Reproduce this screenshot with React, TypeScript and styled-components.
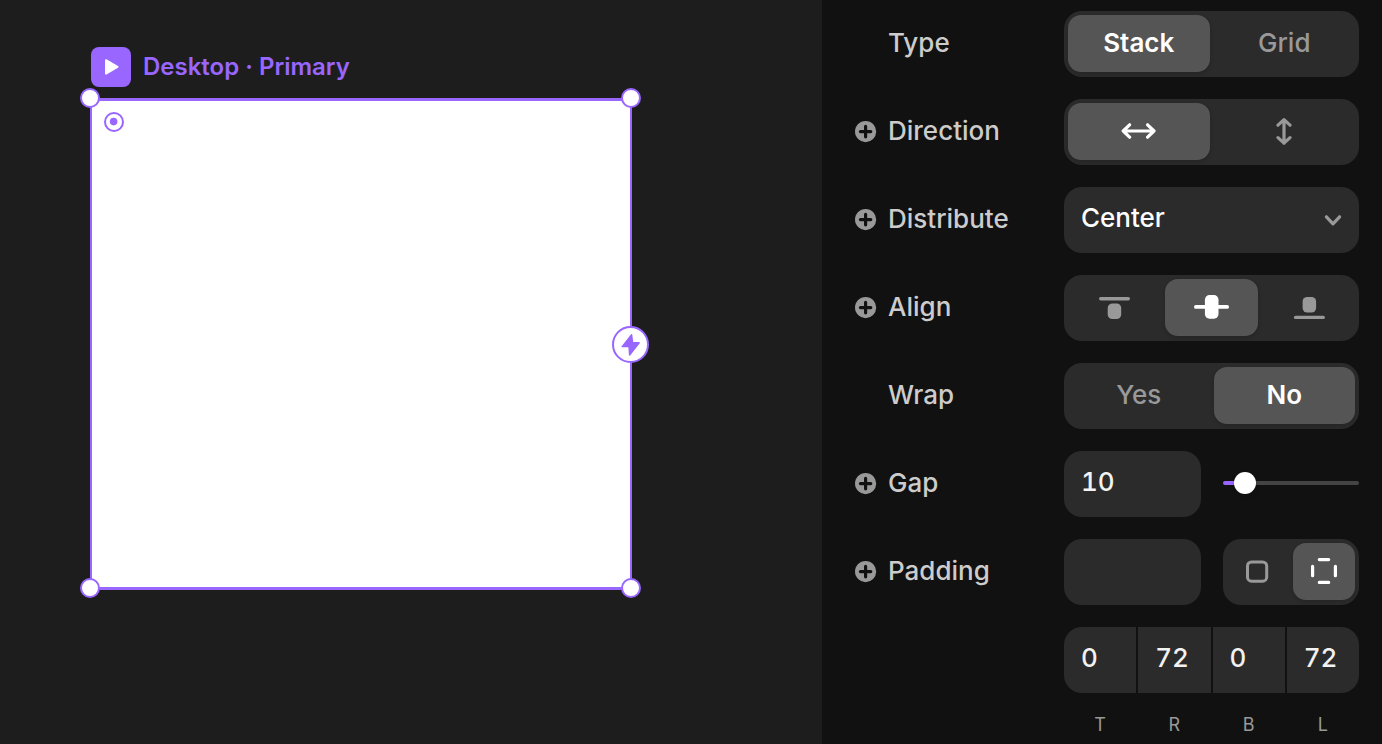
import React, { useState } from "react";
import styled, { createGlobalStyle } from "styled-components";

const color = {
  canvas: "#1d1d1d",
  panel: "#111111",
  field: "#2b2b2b",
  active: "#555555",
  accent: "#9966ff",
  label: "#cccccc",
  muted: "#999999",
};

const GlobalStyle = createGlobalStyle`
  *, *::before, *::after { box-sizing: border-box; }
  body {
    margin: 0;
    background: ${color.panel};
    font-family: Inter, "Liberation Sans", sans-serif;
    font-size: 26px;
    font-weight: 500;
    line-height: 32px;
  }
  button, input, select {
    font: inherit;
    margin: 0;
    border: 0;
    outline: 0;
  }
  button { cursor: pointer; }
  svg { display: block; }
`;

const Editor = styled.div`
  display: flex;
  min-height: 100vh;
`;

const Canvas = styled.main`
  flex: 1;
  min-width: 0;
  padding: 47px 190px 47px 90px;
  background: ${color.canvas};
`;

const FrameTitle = styled.header`
  display: flex;
  align-items: center;
  gap: 12px;
  margin: 0 0 11px 1px;
  color: ${color.accent};
  font-size: 24px;
  font-weight: 600;
  white-space: nowrap;
`;

const PlayButton = styled.button`
  display: grid;
  place-items: center;
  width: 40px;
  height: 40px;
  padding: 0;
  border-radius: 8px;
  background: ${color.accent};
`;

const Frame = styled.section`
  position: relative;
  aspect-ratio: 542 / 492;
  border: 2px solid ${color.accent};
  border-block-width: 3px;
  background: #ffffff;
`;

const Handle = styled.span<{ $v: "top" | "bottom"; $h: "left" | "right" }>`
  position: absolute;
  ${(p) => p.$v}: ${(p) => (p.$v === "top" ? -13 : -11)}px;
  ${(p) => p.$h}: ${(p) => (p.$h === "left" ? -12 : -11)}px;
  width: 20px;
  height: 20px;
  border: 2px solid ${color.accent};
  border-radius: 50%;
  background: #ffffff;
`;

const Target = styled.span`
  position: absolute;
  top: 11px;
  left: 12px;
`;

const BoltButton = styled.button`
  position: absolute;
  top: 50%;
  right: -19px;
  display: grid;
  place-items: center;
  width: 37px;
  height: 37px;
  margin-top: -18px;
  padding: 0;
  border: 2px solid ${color.accent};
  border-radius: 50%;
  background: #ffffff;
`;

const Panel = styled.aside`
  display: flex;
  flex-direction: column;
  gap: 22px;
  width: 560px;
  padding: 11px 23px 9px 33px;
  background: ${color.panel};
`;

const Row = styled.div`
  display: grid;
  grid-template-columns: 209px minmax(0, 1fr);
  align-items: center;
`;

const RowHead = styled.div`
  display: grid;
  grid-template-columns: 22px 1fr;
  column-gap: 11px;
  align-items: center;
`;

const AddButton = styled.button`
  width: 22px;
  height: 22px;
  padding: 0;
  background: none;
`;

const RowLabel = styled.label`
  grid-column: 2;
  padding-bottom: 2px;
  color: ${color.label};
`;

const Split = styled.div`
  display: grid;
  grid-template-columns: 1fr 1fr;
  gap: 22px;
  align-items: center;
`;

const Segments = styled.div`
  display: grid;
  grid-auto-flow: column;
  grid-auto-columns: 1fr;
  gap: 4px;
  height: 66px;
  padding: 4px 4px 5px;
  border-radius: 18px;
  background: ${color.field};
`;

const Segment = styled.button<{ $on: boolean }>`
  display: grid;
  place-items: center;
  padding: 0 0 1px;
  border-radius: 13px;
  background: ${(p) => (p.$on ? color.active : "transparent")};
  box-shadow: ${(p) => (p.$on ? "0 2px 4px rgba(0, 0, 0, 0.15)" : "none")};
  color: ${(p) => (p.$on ? "#ffffff" : color.muted)};
  font-weight: ${(p) => (p.$on ? 600 : 500)};
`;

const SelectBox = styled.div`
  display: grid;
  align-items: center;

  & > * {
    grid-area: 1 / 1;
  }

  & > svg {
    justify-self: end;
    margin-right: 16px;
    pointer-events: none;
  }
`;

const Select = styled.select`
  appearance: none;
  width: 100%;
  height: 66px;
  padding: 0 48px 4px 17px;
  border-radius: 18px;
  background: ${color.field};
  color: #ffffff;
`;

const Field = styled.input`
  width: 100%;
  min-width: 0;
  height: 66px;
  padding: 0 0 5px 17px;
  border-radius: 18px;
  background: ${color.field};
  color: #f2f2f2;
  font-variant-numeric: tabular-nums;
`;

const Slider = styled.input`
  appearance: none;
  width: 100%;
  height: 22px;
  background: none;

  &::-webkit-slider-runnable-track {
    height: 4px;
    border-radius: 2px;
    background: linear-gradient(
      to right,
      ${color.accent} var(--fill),
      #444444 var(--fill)
    );
  }

  &::-webkit-slider-thumb {
    appearance: none;
    width: 22px;
    height: 22px;
    margin-top: -9px;
    border-radius: 50%;
    background: #ffffff;
    box-shadow: 0 2px 4px rgba(0, 0, 0, 0.2);
  }
`;

const SliderBox = styled.div`
  display: flex;
  padding-bottom: 2px;
`;

const Sides = styled.div`
  grid-column: 2;
  display: grid;
  grid-template-columns: repeat(4, 1fr);
  gap: 2px;
`;

const Side = styled.label`
  display: flex;
  flex-direction: column;
  gap: 22px;
  color: ${color.muted};
  font-size: 18px;
  font-weight: 400;
  line-height: 20px;
  text-align: center;

  ${Field} {
    border-radius: 0;
    font-size: 26px;
    font-weight: 500;
  }
  &:first-child ${Field} {
    border-radius: 18px 0 0 18px;
  }
  &:last-child ${Field} {
    border-radius: 0 18px 18px 0;
  }
`;

const PlayIcon = () => (
  <svg width="40" height="40" viewBox="0 0 40 40" aria-hidden="true">
    <path d="M15 13.2 26.5 19.9 15 26.6Z" fill="#fff" stroke="#fff" strokeWidth="2" strokeLinejoin="round" />
  </svg>
);

const TargetIcon = () => (
  <svg width="20" height="20" viewBox="0 0 20 20" aria-hidden="true">
    <circle cx="10" cy="10" r="9" fill="none" stroke={color.accent} strokeWidth="2" />
    <circle cx="9.6" cy="9.6" r="3.8" fill={color.accent} />
  </svg>
);

const BoltIcon = () => (
  <svg width="20" height="24" viewBox="0 0 20 24" aria-hidden="true">
    <path
      d="M10.6 1.8 1.2 13.6H8L8.6 22 18.2 9.8H11.6Z"
      fill={color.accent}
      stroke={color.accent}
      strokeWidth="1.4"
      strokeLinejoin="round"
    />
  </svg>
);

const PlusIcon = () => (
  <svg width="22" height="22" viewBox="0 0 22 22" aria-hidden="true">
    <circle cx="10.6" cy="10.6" r="10.6" fill={color.muted} />
    <path d="M10.6 5.4v10.4M5.4 10.6h10.4" stroke={color.panel} strokeWidth="3.2" strokeLinecap="round" />
  </svg>
);

const HorizontalIcon = () => (
  <svg width="36" height="18" viewBox="0 0 36 18" fill="none" stroke="currentColor" strokeWidth="3.2" strokeLinecap="round" strokeLinejoin="round" aria-hidden="true">
    <path d="M2.2 9h30.8M8.6 2.8 2.2 9 8.6 15.2M26.6 2.8 33 9 26.6 15.2" />
  </svg>
);

const VerticalIcon = () => (
  <svg width="18" height="28" viewBox="0 0 18 28" fill="none" stroke="currentColor" strokeWidth="3.2" strokeLinecap="round" strokeLinejoin="round" aria-hidden="true">
    <path d="M9 2.6v23.6M3 8.2 9 2.6l6 5.6M3 20.6l6 5.6 6-5.6" />
  </svg>
);

const ChevronIcon = () => (
  <svg width="20" height="14" viewBox="0 0 20 14" fill="none" stroke={color.muted} strokeWidth="3.2" strokeLinecap="round" strokeLinejoin="round" aria-hidden="true">
    <path d="M3.4 3.8 10 10.8 16.6 3.8" />
  </svg>
);

const AlignStartIcon = () => (
  <svg width="36" height="26" viewBox="0 0 36 26" fill="currentColor" aria-hidden="true">
    <rect x="2" y="3" width="31" height="3.4" rx="1.7" />
    <rect x="10.7" y="9.5" width="13.5" height="15.6" rx="4.6" />
  </svg>
);

const AlignCenterIcon = () => (
  <svg width="36" height="26" viewBox="0 0 36 26" fill="currentColor" aria-hidden="true">
    <rect x="0" y="11" width="35" height="3.8" rx="1.9" />
    <rect x="10.9" y="1.1" width="13.6" height="23.6" rx="4.6" />
  </svg>
);

const AlignEndIcon = () => (
  <svg width="36" height="26" viewBox="0 0 36 26" fill="currentColor" aria-hidden="true">
    <rect x="11.6" y="3" width="13.5" height="15.6" rx="4.6" />
    <rect x="2.9" y="21.7" width="31" height="3.4" rx="1.7" />
  </svg>
);

const UniformIcon = () => (
  <svg width="24" height="24" viewBox="0 0 24 24" fill="none" aria-hidden="true">
    <rect x="1.5" y="3" width="19.2" height="19.2" rx="4" stroke="currentColor" strokeWidth="3" />
  </svg>
);

const PerSideIcon = () => (
  <svg width="28" height="28" viewBox="0 0 28 28" fill="none" stroke="currentColor" strokeWidth="3.2" strokeLinecap="round" aria-hidden="true">
    <path d="M9.3 2.6h9.4M9.3 25.4h9.4M2.6 9.3v9.4M25.4 9.3v9.4" />
  </svg>
);

type Option = { name: string; icon?: React.ReactNode };

function SegmentedControl({ label, options, initial }: { label: string; options: Option[]; initial: number }) {
  const [selected, setSelected] = useState(initial);
  return (
    <Segments role="group" aria-label={label}>
      {options.map((option, i) => (
        <Segment
          key={option.name}
          type="button"
          $on={i === selected}
          aria-pressed={i === selected}
          aria-label={option.icon ? option.name : undefined}
          onClick={() => setSelected(i)}
        >
          {option.icon ?? option.name}
        </Segment>
      ))}
    </Segments>
  );
}

function Property({
  name,
  htmlFor,
  add = true,
  children,
}: {
  name: string;
  htmlFor?: string;
  add?: boolean;
  children: React.ReactNode;
}) {
  return (
    <Row>
      <RowHead>
        {add && (
          <AddButton type="button" aria-label={`Add ${name} variable`}>
            <PlusIcon />
          </AddButton>
        )}
        <RowLabel as={htmlFor ? "label" : "span"} htmlFor={htmlFor}>
          {name}
        </RowLabel>
      </RowHead>
      {children}
    </Row>
  );
}

const sides = [
  { name: "T", value: 0 },
  { name: "R", value: 72 },
  { name: "B", value: 0 },
  { name: "L", value: 72 },
];

export default function App() {
  const [gap, setGap] = useState(10);

  return (
    <Editor>
      <GlobalStyle />
      <Canvas>
        <FrameTitle>
          <PlayButton type="button" aria-label="Preview">
            <PlayIcon />
          </PlayButton>
          <span>Desktop · Primary</span>
        </FrameTitle>
        <Frame aria-label="Desktop frame">
          <Target>
            <TargetIcon />
          </Target>
          <Handle $v="top" $h="left" />
          <Handle $v="top" $h="right" />
          <Handle $v="bottom" $h="left" />
          <Handle $v="bottom" $h="right" />
          <BoltButton type="button" aria-label="Add interaction">
            <BoltIcon />
          </BoltButton>
        </Frame>
      </Canvas>

      <Panel aria-label="Layout">
        <Property name="Type" add={false}>
          <SegmentedControl label="Type" initial={0} options={[{ name: "Stack" }, { name: "Grid" }]} />
        </Property>
        <Property name="Direction">
          <SegmentedControl
            label="Direction"
            initial={0}
            options={[
              { name: "Horizontal", icon: <HorizontalIcon /> },
              { name: "Vertical", icon: <VerticalIcon /> },
            ]}
          />
        </Property>
        <Property name="Distribute" htmlFor="distribute">
          <SelectBox>
            <Select id="distribute" defaultValue="Center">
              <option>Start</option>
              <option>Center</option>
              <option>End</option>
            </Select>
            <ChevronIcon />
          </SelectBox>
        </Property>
        <Property name="Align">
          <SegmentedControl
            label="Align"
            initial={1}
            options={[
              { name: "Start", icon: <AlignStartIcon /> },
              { name: "Center", icon: <AlignCenterIcon /> },
              { name: "End", icon: <AlignEndIcon /> },
            ]}
          />
        </Property>
        <Property name="Wrap" add={false}>
          <SegmentedControl label="Wrap" initial={1} options={[{ name: "Yes" }, { name: "No" }]} />
        </Property>
        <Property name="Gap" htmlFor="gap">
          <Split>
            <Field id="gap" value={gap} onChange={(e) => setGap(Number(e.target.value) || 0)} />
            <SliderBox>
              <Slider
                type="range"
                min={0}
                max={100}
                value={gap}
                aria-label="Gap"
                style={{ "--fill": `calc(11px + (100% - 22px) * ${gap / 100})` } as React.CSSProperties}
                onChange={(e) => setGap(Number(e.target.value))}
              />
            </SliderBox>
          </Split>
        </Property>
        <Property name="Padding" htmlFor="padding">
          <Split>
            <Field id="padding" />
            <SegmentedControl
              label="Padding mode"
              initial={1}
              options={[
                { name: "Uniform", icon: <UniformIcon /> },
                { name: "Per side", icon: <PerSideIcon /> },
              ]}
            />
          </Split>
        </Property>
        <Row>
          <Sides>
            {sides.map((side) => (
              <Side key={side.name}>
                <Field defaultValue={side.value} />
                {side.name}
              </Side>
            ))}
          </Sides>
        </Row>
      </Panel>
    </Editor>
  );
}
